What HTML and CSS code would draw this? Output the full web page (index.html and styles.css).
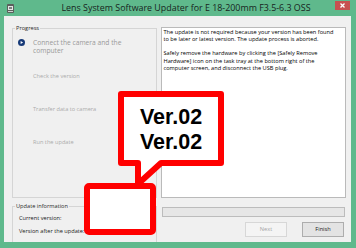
FILE: index.html
```html
<!DOCTYPE html>
<html lang="en">
<head>
<meta charset="utf-8">
<title>Lens System Software Updater</title>
<link rel="stylesheet" href="styles.css">
</head>
<body>
<div class="window">
  <div class="titlebar">
    <svg class="app-icon" viewBox="0 0 7 9" width="7" height="9">
      <rect x="0" y="0" width="7" height="9" rx="1" fill="#5a5f5c"/>
      <rect x="1" y="2" width="5" height="4" fill="#e4e6e5"/>
      <rect x="2" y="3" width="3" height="2" fill="#7d8380"/>
      <rect x="1" y="7" width="5" height="1" fill="#cfd3d1"/>
    </svg>
    <div class="title">Lens System Software Updater for E 18-200mm F3.5-6.3 OSS</div>
    <div class="close">
      <svg viewBox="0 0 15 9" width="15" height="9">
        <path d="M5.5 2.5 L9.5 6.5 M9.5 2.5 L5.5 6.5" stroke="#fff" stroke-width="1.3" fill="none"/>
      </svg>
    </div>
  </div>
  <div class="client">
    <fieldset class="group progress">
      <legend>Progress</legend>
      <ol class="steps">
        <li class="step current">
          <svg class="step-icon" viewBox="0 0 7 7" width="7" height="7">
            <circle cx="3.5" cy="3.5" r="3.5" fill="#173a78"/>
            <path d="M2.6 1.9 L5.1 3.5 L2.6 5.1 Z" fill="#fff"/>
          </svg>
          <span class="step-label">Connect the camera and the computer</span>
        </li>
        <li class="step"><span></span><span class="step-label">Check the version</span></li>
        <li class="step"><span></span><span class="step-label">Transfer data to camera</span></li>
        <li class="step"><span></span><span class="step-label">Run the update</span></li>
      </ol>
    </fieldset>
    <div class="message">The update is not required because your version has been found<br>to be later or latest version. The update process is aborted.<br><br>Safely remove the hardware by clicking the [Safely Remove<br>Hardware] icon on the task tray at the bottom right of the<br>computer screen, and disconnect the USB plug.</div>
    <fieldset class="group info">
      <legend>Update information</legend>
      <div class="info-rows">
        <div class="info-row">Current version:</div>
        <div class="info-row">Version after the update:</div>
      </div>
    </fieldset>
    <div class="actions">
      <div class="progressbar"></div>
      <div class="buttons">
        <button class="btn btn-next" disabled>Next</button>
        <button class="btn btn-finish">Finish</button>
      </div>
    </div>
  </div>
  <svg class="callout" viewBox="0 0 356 248" width="356" height="248">
    <path d="M121 94 H221 V163 H161 L138 184 V163 H121 Z" fill="#fff" stroke="#ff0000" stroke-width="6" stroke-linejoin="round"/>
    <rect x="87" y="186" width="66" height="46" rx="2" fill="#fff" stroke="#ff0000" stroke-width="6"/>
  </svg>
  <div class="callout-text">Ver.02<br>Ver.02</div>
</div>
</body>
</html>
```
FILE: styles.css
```css
* {
  box-sizing: border-box;
  margin: 0;
  padding: 0;
}

html, body {
  width: 356px;
  height: 248px;
  overflow: hidden;
}

body {
  font-family: "Open Sans", "Liberation Sans", sans-serif;
  background: #5fb98c;
}

.window {
  position: relative;
  width: 356px;
  height: 248px;
  background: #5fb98c;
  display: flex;
  flex-direction: column;
}

.titlebar {
  height: 16px;
  flex: none;
  display: flex;
  align-items: center;
  padding-left: 7px;
}

.app-icon {
  flex: none;
  display: block;
}

.title {
  flex: 1;
  text-align: center;
  padding-left: 23px;
  font-size: 8.9px;
  line-height: 16px;
  color: #17241d;
  white-space: nowrap;
}

.close {
  align-self: flex-start;
  margin-top: 1px;
  margin-right: 6px;
  width: 15px;
  height: 9px;
  background: #c75050;
}

.close svg {
  display: block;
}

.client {
  flex: 1;
  margin: 0 5px 6px 4px;
  background: #f0f0f0;
  display: grid;
  grid-template-columns: 145px 185px;
  grid-template-rows: 174px 1fr;
  column-gap: 4px;
  row-gap: 4px;
  padding: 8px 5px 0 8px;
  overflow: hidden;
}

.group {
  border: 1px solid #d5d5d5;
  padding: 0 0 0 2px;
  min-width: 0;
}

.group legend {
  padding: 0 1px;
  font-size: 5.65px;
  line-height: 8px;
  color: #2a2a2a;
}

.steps {
  list-style: none;
  padding: 7px 0 0 3px;
  display: grid;
  grid-auto-rows: 33px;
}

.step {
  display: grid;
  grid-template-columns: 7px 1fr;
  column-gap: 8px;
  align-items: start;
  font-size: 5.65px;
  line-height: 8px;
  color: #ababab;
}

.step-icon {
  display: block;
  margin-top: 0.3px;
}

.step.current {
  font-size: 6.7px;
  color: #999;
}

.step.current .step-label {
  max-width: 105px;
}

.message {
  margin-top: 3px;
  height: 171px;
  align-self: start;
  background: #fff;
  border: 1px solid #bababa;
  padding: 0.5px 1.5px;
  font-size: 5.65px;
  line-height: 7.3px;
  color: #000;
  white-space: nowrap;
  overflow: hidden;
}

.info {
  border-bottom: none;
}

.info-rows {
  padding: 1.5px 0 0 4px;
}

.info-row {
  font-size: 5.65px;
  line-height: 13px;
  color: #1a1a1a;
  white-space: nowrap;
}

.actions {
  display: flex;
  flex-direction: column;
  padding-top: 5px;
  gap: 5px;
}

.progressbar {
  height: 10px;
  margin: 0 1px;
  background: #e6e6e6;
  border: 1px solid #bcbcbc;
}

.buttons {
  display: flex;
  justify-content: flex-end;
  gap: 15px;
  padding-right: 2px;
}

.btn {
  width: 42px;
  height: 15px;
  font-family: "Open Sans", "Liberation Sans", sans-serif;
  font-size: 5.65px;
  line-height: 13px;
}

.btn-next {
  background: #f4f4f4;
  border: 1px solid #d7d7d7;
  color: #a5a5a5;
}

.btn-finish {
  background: #e3e3e3;
  border: 1px solid #adadad;
  color: #1a1a1a;
}

.callout {
  position: absolute;
  left: 0;
  top: 0;
  pointer-events: none;
}

.callout-text {
  position: absolute;
  left: 124px;
  top: 105px;
  width: 94px;
  text-align: center;
  font-family: "Liberation Sans", Arial, sans-serif;
  font-weight: bold;
  font-size: 21.5px;
  line-height: 25px;
  color: #000;
}
```
